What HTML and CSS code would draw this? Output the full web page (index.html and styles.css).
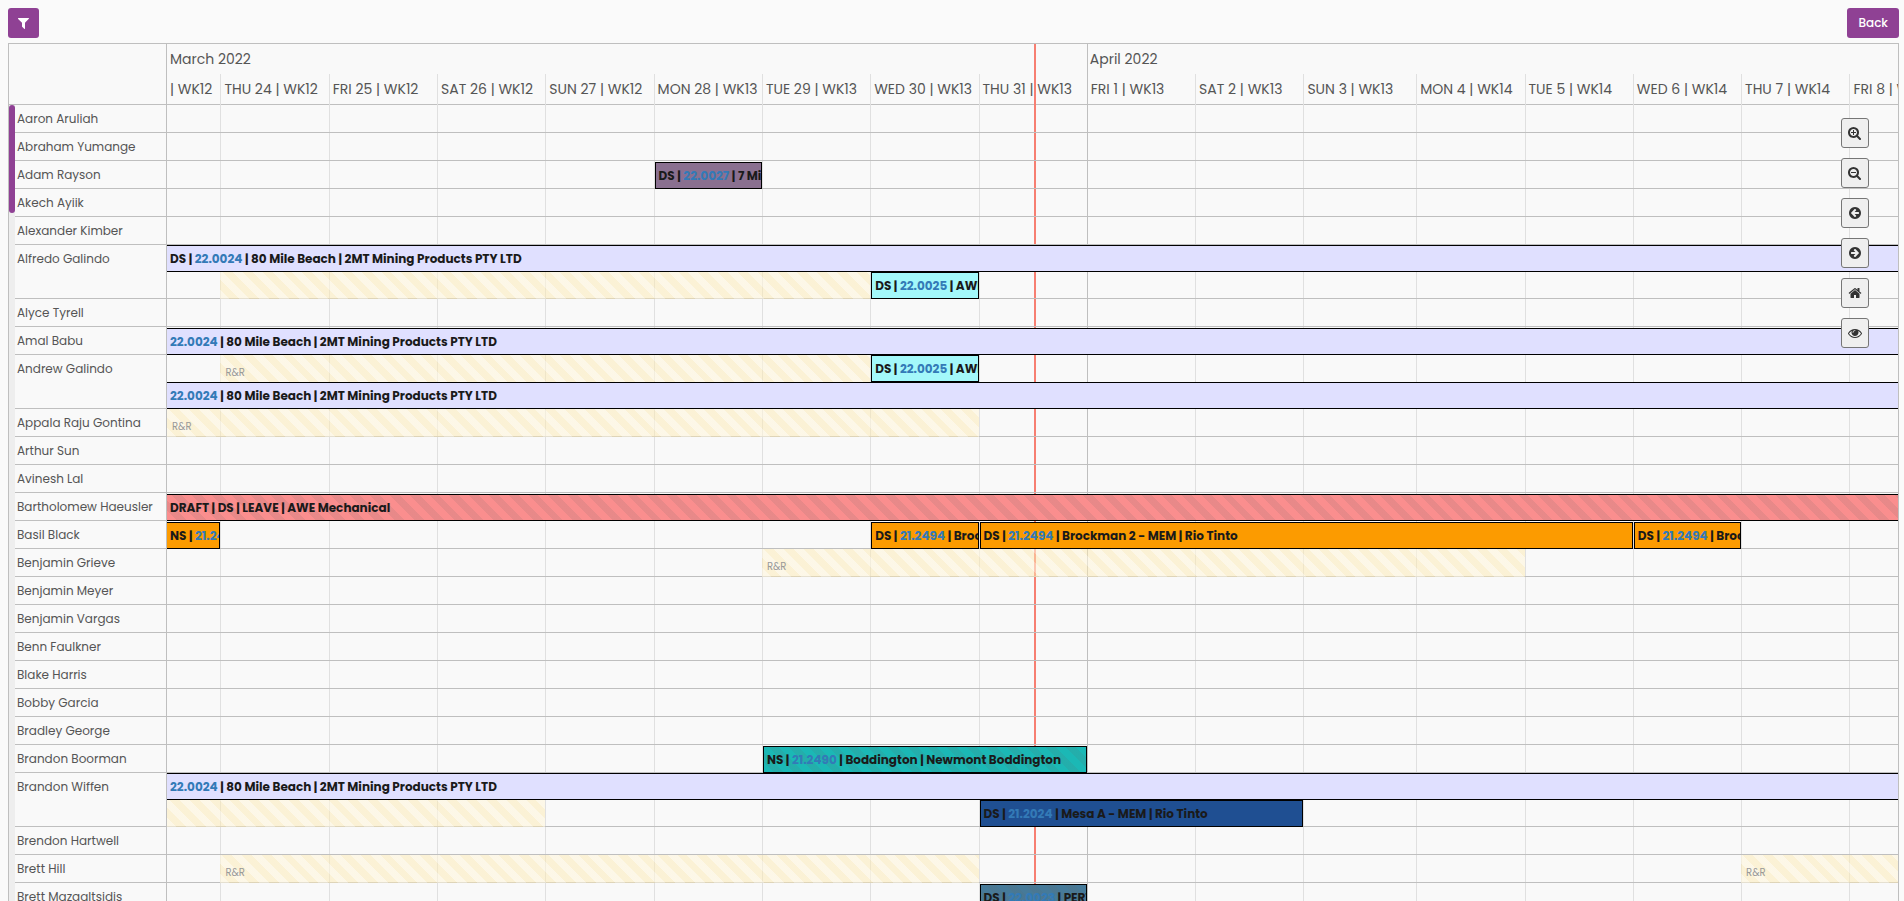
FILE: index.html
```html
<!DOCTYPE html>
<html lang="en">
<head>
<meta charset="utf-8">
<title>Roster timeline</title>
<link rel="stylesheet" href="styles.css">
</head>
<body>
<header class="toolbar">
  <button class="btn filter" type="button" aria-label="Filter"><svg class="icon funnel" viewBox="192 256 1408 1408"><path d="M1595 295q17 41-14 70l-493 493v742q0 42-39 59-13 5-25 5-27 0-45-19l-256-256q-19-19-19-45v-482l-493-493q-31-29-14-70 17-39 59-39h1280q42 0 59 39z"/></svg></button>
  <button class="btn" type="button">Back</button>
</header>
<main class="chart">
  <div class="head">
    <div class="corner"></div>
    <div class="axis days">
      <span class="month march">March 2022</span><span class="month april">April 2022</span>
      <span class="day first">| WK12</span><span class="day">THU 24 | WK12</span><span class="day">FRI 25 | WK12</span><span class="day">SAT 26 | WK12</span><span class="day">SUN 27 | WK12</span><span class="day">MON 28 | WK13</span><span class="day">TUE 29 | WK13</span><span class="day">WED 30 | WK13</span><span class="day">THU 31 | WK13</span><span class="day">FRI 1 | WK13</span><span class="day">SAT 2 | WK13</span><span class="day">SUN 3 | WK13</span><span class="day">MON 4 | WK14</span><span class="day">TUE 5 | WK14</span><span class="day">WED 6 | WK14</span><span class="day">THU 7 | WK14</span><span class="day">FRI 8 | WK14</span>
    </div>
  </div>
  <div class="grid days" aria-hidden="true">
    <i></i><i></i><i></i><i></i><i></i><i></i><i></i><i></i><i></i><i class="major"></i><i></i><i></i><i></i><i></i><i></i><i></i><i></i>
    <b class="now"></b>
  </div>
  <div class="body">
    <div class="scroll"><div class="thumb"></div></div>
    <div class="rows">
      <div class="row"><span class="name">Aaron Aruliah</span><div class="lanes days"></div></div>
      <div class="row"><span class="name">Abraham Yumange</span><div class="lanes days"></div></div>
      <div class="row"><span class="name">Adam Rayson</span><div class="lanes days"><div class="bar plum" style="grid-column:6/7">DS | <a href="#">22.0027</a> | 7 Mile</div></div></div>
      <div class="row"><span class="name">Akech Ayiik</span><div class="lanes days"></div></div>
      <div class="row"><span class="name">Alexander Kimber</span><div class="lanes days"></div></div>
      <div class="row double"><span class="name">Alfredo Galindo</span><div class="lanes days">
        <div class="bar lavender from-left to-right" style="grid-column:1/18">DS | <a href="#">22.0024</a> | 80 Mile Beach | 2MT Mining Products PTY LTD</div>
        <div class="rest second" style="grid-column:2/8"></div>
        <div class="bar cyan second" style="grid-column:8/9">DS | <a href="#">22.0025</a> | AWE</div></div></div>
      <div class="row"><span class="name">Alyce Tyrell</span><div class="lanes days"></div></div>
      <div class="row"><span class="name">Amal Babu</span><div class="lanes days"><div class="bar lavender from-left to-right" style="grid-column:1/18"><a href="#">22.0024</a> | 80 Mile Beach | 2MT Mining Products PTY LTD</div></div></div>
      <div class="row double"><span class="name">Andrew Galindo</span><div class="lanes days">
        <div class="rest" style="grid-column:2/8">R&amp;R</div>
        <div class="bar cyan" style="grid-column:8/9">DS | <a href="#">22.0025</a> | AWE</div>
        <div class="bar lavender from-left to-right second" style="grid-column:1/18"><a href="#">22.0024</a> | 80 Mile Beach | 2MT Mining Products PTY LTD</div></div></div>
      <div class="row"><span class="name">Appala Raju Gontina</span><div class="lanes days"><div class="rest" style="grid-column:1/9">R&amp;R</div></div></div>
      <div class="row"><span class="name">Arthur Sun</span><div class="lanes days"></div></div>
      <div class="row"><span class="name">Avinesh Lal</span><div class="lanes days"></div></div>
      <div class="row"><span class="name">Bartholomew Haeusler</span><div class="lanes days"><div class="bar red striped from-left to-right" style="grid-column:1/18">DRAFT | DS | LEAVE | AWE Mechanical</div></div></div>
      <div class="row"><span class="name">Basil Black</span><div class="lanes days">
        <div class="bar orange from-left" style="grid-column:1/2">NS | <a href="#">21.2494</a></div>
        <div class="bar orange" style="grid-column:8/9">DS | <a href="#">21.2494</a> | Brock</div>
        <div class="bar orange" style="grid-column:9/15">DS | <a href="#">21.2494</a> | Brockman 2 - MEM | Rio Tinto</div>
        <div class="bar orange" style="grid-column:15/16">DS | <a href="#">21.2494</a> | Brock</div></div></div>
      <div class="row"><span class="name">Benjamin Grieve</span><div class="lanes days"><div class="rest" style="grid-column:7/14">R&amp;R</div></div></div>
      <div class="row"><span class="name">Benjamin Meyer</span><div class="lanes days"></div></div>
      <div class="row"><span class="name">Benjamin Vargas</span><div class="lanes days"></div></div>
      <div class="row"><span class="name">Benn Faulkner</span><div class="lanes days"></div></div>
      <div class="row"><span class="name">Blake Harris</span><div class="lanes days"></div></div>
      <div class="row"><span class="name">Bobby Garcia</span><div class="lanes days"></div></div>
      <div class="row"><span class="name">Bradley George</span><div class="lanes days"></div></div>
      <div class="row"><span class="name">Brandon Boorman</span><div class="lanes days"><div class="bar teal striped" style="grid-column:7/10">NS | <a href="#">21.2490</a> | Boddington | Newmont Boddington</div></div></div>
      <div class="row double"><span class="name">Brandon Wiffen</span><div class="lanes days">
        <div class="bar lavender from-left to-right" style="grid-column:1/18"><a href="#">22.0024</a> | 80 Mile Beach | 2MT Mining Products PTY LTD</div>
        <div class="rest second" style="grid-column:1/5"></div>
        <div class="bar navy second" style="grid-column:9/12">DS | <a href="#">21.2024</a> | Mesa A - MEM | Rio Tinto</div></div></div>
      <div class="row"><span class="name">Brendon Hartwell</span><div class="lanes days"></div></div>
      <div class="row"><span class="name">Brett Hill</span><div class="lanes days"><div class="rest" style="grid-column:2/9">R&amp;R</div><div class="rest" style="grid-column:16/18">R&amp;R</div></div></div>
      <div class="row"><span class="name">Brett Mazgaltsidis</span><div class="lanes days"><div class="bar slate striped" style="grid-column:9/10">DS | <a href="#">22.0023</a> | PERTH</div></div></div>
    </div>
  </div>
  <div class="tools">
    <button class="tool" type="button" aria-label="Zoom in"><svg class="icon" viewBox="0 0 1792 1792"><path d="M1024 800v64q0 13-9.5 22.5t-22.5 9.5h-224v224q0 13-9.5 22.5t-22.5 9.5h-64q-13 0-22.5-9.5t-9.5-22.5v-224h-224q-13 0-22.5-9.5t-9.5-22.5v-64q0-13 9.5-22.5t22.5-9.5h224v-224q0-13 9.5-22.5t22.5-9.5h64q13 0 22.5 9.5t9.5 22.5v224h224q13 0 22.5 9.5t9.5 22.5zm128 32q0-185-131.5-316.5t-316.5-131.5-316.5 131.5-131.5 316.5 131.5 316.5 316.5 131.5 316.5-131.5 131.5-316.5zm512 832q0 53-37.5 90.5t-90.5 37.5q-54 0-90-38l-343-342q-179 124-399 124-143 0-273.5-55.5t-225-150-150-225-55.5-273.5 55.5-273.5 150-225 225-150 273.5-55.5 273.5 55.5 225 150 150 225 55.5 273.5q0 220-124 399l343 343q37 37 37 90z"/></svg></button>
    <button class="tool" type="button" aria-label="Zoom out"><svg class="icon" viewBox="0 0 1792 1792"><path d="M1024 800v64q0 13-9.5 22.5t-22.5 9.5h-576q-13 0-22.5-9.5t-9.5-22.5v-64q0-13 9.5-22.5t22.5-9.5h576q13 0 22.5 9.5t9.5 22.5zm128 32q0-185-131.5-316.5t-316.5-131.5-316.5 131.5-131.5 316.5 131.5 316.5 316.5 131.5 316.5-131.5 131.5-316.5zm512 832q0 53-37.5 90.5t-90.5 37.5q-54 0-90-38l-343-342q-179 124-399 124-143 0-273.5-55.5t-225-150-150-225-55.5-273.5 55.5-273.5 150-225 225-150 273.5-55.5 273.5 55.5 225 150 150 225 55.5 273.5q0 220-124 399l343 343q37 37 37 90z"/></svg></button>
    <button class="tool" type="button" aria-label="Earlier"><svg class="icon" viewBox="0 0 1792 1792"><path id="arrow" d="M1408 960v-128q0-26-19-45t-45-19h-502l189-189q19-19 19-45t-19-45l-91-91q-18-18-45-18t-45 18l-362 362-91 91q-18 18-18 45t18 45l91 91 362 362q18 18 45 18t45-18l91-91q18-18 18-45t-18-45l-189-189h502q26 0 45-19t19-45zm256-64q0 209-103 385.5t-279.5 279.5-385.5 103-385.5-103-279.5-279.5-103-385.5 103-385.5 279.5-279.5 385.5-103 385.5 103 279.5 279.5 103 385.5z"/></svg></button>
    <button class="tool" type="button" aria-label="Later"><svg class="icon" viewBox="0 0 1792 1792"><use href="#arrow" transform="matrix(-1 0 0 1 1792 0)"/></svg></button>
    <button class="tool" type="button" aria-label="Today"><svg class="icon" viewBox="0 0 1792 1792"><path d="M1472 992v480q0 26-19 45t-45 19h-384v-384h-256v384h-384q-26 0-45-19t-19-45v-480q0-1 .5-3t.5-3l575-474 575 474q1 2 1 6zm223-69l-62 74q-8 9-21 11h-3q-13 0-21-7l-692-577-692 577q-12 8-24 7-13-2-21-11l-62-74q-8-10-7-23.5t11-21.5l719-599q32-26 76-26t76 26l244 204v-195q0-14 9-23t23-9h192q14 0 23 9t9 23v408l219 182q10 8 11 21.5t-7 23.5z"/></svg></button>
    <button class="tool" type="button" aria-label="Show or hide"><svg class="icon" viewBox="0 0 1792 1792"><path d="M1664 960q-152-236-381-353 61 104 61 225 0 185-131.5 316.5t-316.5 131.5-316.5-131.5-131.5-316.5q0-121 61-225-229 117-381 353 133 205 333.5 326.5t434.5 121.5 434.5-121.5 333.5-326.5zm-720-384q0-20-14-34t-34-14q-125 0-214.5 89.5t-89.5 214.5q0 20 14 34t34 14 34-14 14-34q0-86 61-147t147-61q20 0 34-14t14-34zm848 384q0 34-20 69-140 230-376.5 368.5t-499.5 138.5-499.5-139-376.5-368q-20-35-20-69t20-69q140-229 376.5-368t499.5-139 499.5 139 376.5 368q20 35 20 69z"/></svg></button>
  </div>
</main>
</body>
</html>
```

FILE: styles.css
```css
* { box-sizing: border-box; }

body {
  margin: 0;
  height: 100vh;
  padding: 8px 5px 0 8px;
  display: flex;
  flex-direction: column;
  gap: 5px;
  overflow: hidden;
  background: #fafafa;
  color: #555;
  font-family: Poppins, Inter, "Open Sans", sans-serif;
  font-size: 14px;
  font-weight: 400;
}

.toolbar { display: flex; justify-content: space-between; }

.btn {
  height: 30px;
  padding: 0 11px;
  border: 0;
  border-radius: 3px;
  background: #8f4194;
  color: #fff;
  font: 500 12px Poppins, Inter, "Open Sans", sans-serif;
  display: flex;
  align-items: center;
  justify-content: center;
}

.filter { padding: 0 10px; }

.icon { width: 14px; height: 14px; flex: none; fill: currentColor; }
.funnel { width: 11px; height: 11px; }

.chart {
  position: relative;
  flex: 1;
  min-height: 0;
  overflow: hidden;
  border: 1px solid #bfbfbf;
  border-bottom: 0;
  background: #f9f9f9;
}

/* One track per day; the first and last days are partly out of view
   and Sunday 3 April has 25 hours. */
.days {
  display: grid;
  grid-template-columns: 534fr repeat(10, 1083fr) 1128fr repeat(4, 1083fr) 486fr;
}
.days > * { min-width: 0; }

.head { display: grid; grid-template-columns: 158px 1fr; border-bottom: 1px solid #bfbfbf; }
.corner { border-right: 1px solid #bfbfbf; }
.axis { grid-auto-rows: 30px; line-height: 30px; white-space: nowrap; }
.month { padding-left: 3px; }
.march { grid-column: 1 / 10; }
.april { grid-column: 10 / 18; }
.day { padding-left: 4px; overflow: hidden; }
.day.first { padding-left: 3px; }

.grid { position: absolute; inset: 0 0 0 158px; }
.grid i { margin-top: 30px; border-left: 1px solid #e0e0e0; }
.grid i:first-child { border-left: 0; }
.grid .major { margin-top: 0; border-color: #bfbfbf; }
.now { position: absolute; top: 0; bottom: 0; left: 50.1%; width: 2px; background: #f77f72; }

.body { position: relative; z-index: 1; display: grid; grid-template-columns: 6px 1fr; }
.scroll { background: #eee; }
.thumb { height: 108px; border-radius: 3px; background: #8f4194; }

.row {
  display: grid;
  grid-template-columns: 152px 1fr;
  min-height: 28px;
  box-shadow: inset 0 -1px #bfbfbf;
}
.name {
  padding-left: 2px;
  border-right: 1px solid #bfbfbf;
  font-size: 12px;
  line-height: 28px;
  white-space: nowrap;
}
.lanes { grid-template-rows: 28px; }
.lanes > * { grid-row: 1; }
.double .lanes { grid-template-rows: 27px 27px; }
.lanes > .second { grid-row: 2; }

.bar {
  height: 27px;
  margin: 1px 0 0 1px;
  padding-left: 3px;
  border: 1px solid #000;
  overflow: hidden;
  color: #1a1a1a;
  font-size: 12px;
  font-weight: 700;
  line-height: 26px;
  white-space: nowrap;
}
.double .bar { margin-top: 0; }
.bar a { color: #337ab7; text-decoration: none; }
.from-left { margin-left: 0; border-left: 0; }
.to-right { border-right: 0; }

.lavender { background-color: #e0e0ff; }
.cyan { background-color: #a3f8fa; }
.plum { background-color: #8a7090; }
.orange { background-color: #fc9b00; }
.navy { background-color: #1f4f92; }
.red { background-color: #fa8e8e; }
.teal { background-color: #1bb8b5; }
.slate { background-color: #467a99; }
.striped {
  background-image: repeating-linear-gradient(45deg, transparent 0 7px, rgba(100, 100, 100, .12) 7px 14px);
}

.rest {
  padding: 8px 0 0 5px;
  background: repeating-linear-gradient(45deg, rgba(255, 246, 220, .6) 0 7px, rgba(253, 234, 178, .5) 7px 14px);
  color: #999;
  font-size: 10px;
  line-height: 19px;
}

.tools { position: absolute; z-index: 2; top: 74px; right: 29px; display: flex; flex-direction: column; gap: 10px; }
.tool {
  width: 28px;
  height: 30px;
  padding: 0;
  border: 1px solid #767676;
  border-radius: 3px;
  background: #efefef;
  color: #333;
  display: flex;
  align-items: center;
  justify-content: center;
}
```
